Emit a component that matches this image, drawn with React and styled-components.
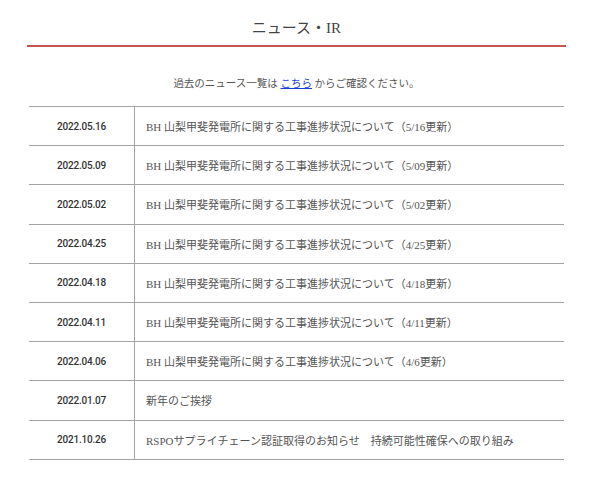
import React from "react";
import styled, { createGlobalStyle } from "styled-components";

const Global = createGlobalStyle`
  html, body { margin: 0; padding: 0; background: #fff; }
  body { font-family: "Liberation Serif", "Noto Sans CJK JP", serif; }
`;

const Page = styled.div`
  width: 539px;
  margin-left: 27px;
  padding-bottom: 22px;
`;

const Heading = styled.h1`
  margin: 0;
  padding: 18px 0 7px;
  font-size: 15px;
  line-height: 20px;
  font-weight: 400;
  color: #444;
  text-align: center;
  border-bottom: 2px solid #c4564f;
`;

const Intro = styled.p`
  margin: 31px 0 0;
  height: 28px;
  font-size: 10.5px;
  line-height: 12px;
  color: #555;
  text-align: center;
`;

const Link = styled.a`
  color: #1a3fd6;
  text-decoration: underline;
`;

const Table = styled.div`
  margin: 0 2px;
  border-bottom: 1px solid #a3a3a3;
`;

const Row = styled.div`
  display: grid;
  grid-template-columns: 106px 1fr;
  height: 39.2px;
  box-sizing: border-box;
  border-top: 1px solid #a3a3a3;
`;

const DateCell = styled.div`
  display: flex;
  align-items: center;
  justify-content: center;
  border-right: 1px solid #a3a3a3;
  font-family: Roboto, "Liberation Sans", Arial, sans-serif;
  font-size: 10px;
  font-weight: 500;
  letter-spacing: -0.2px;
  color: #333;
`;

const TitleCell = styled.div`
  display: flex;
  align-items: center;
  padding-left: 11px;
  font-size: 11px;
  color: #555;
  white-space: pre;
`;

const items = [
  ["2022.05.16", "BH 山梨甲斐発電所に関する工事進捗状況について（5/16更新）"],
  ["2022.05.09", "BH 山梨甲斐発電所に関する工事進捗状況について（5/09更新）"],
  ["2022.05.02", "BH 山梨甲斐発電所に関する工事進捗状況について（5/02更新）"],
  ["2022.04.25", "BH 山梨甲斐発電所に関する工事進捗状況について（4/25更新）"],
  ["2022.04.18", "BH 山梨甲斐発電所に関する工事進捗状況について（4/18更新）"],
  ["2022.04.11", "BH 山梨甲斐発電所に関する工事進捗状況について（4/11更新）"],
  ["2022.04.06", "BH 山梨甲斐発電所に関する工事進捗状況について（4/6更新）"],
  ["2022.01.07", "新年のご挨拶"],
  ["2021.10.26", "RSPOサプライチェーン認証取得のお知らせ　持続可能性確保への取り組み"],
];

export default function App() {
  return (
    <>
      <Global />
      <Page>
        <Heading>ニュース・IR</Heading>
        <Intro>
          過去のニュース一覧は <Link href="#">こちら</Link> からご確認ください。
        </Intro>
        <Table>
          {items.map(([d, t]) => (
            <Row key={d}>
              <DateCell>{d}</DateCell>
              <TitleCell>{t}</TitleCell>
            </Row>
          ))}
        </Table>
      </Page>
    </>
  );
}
